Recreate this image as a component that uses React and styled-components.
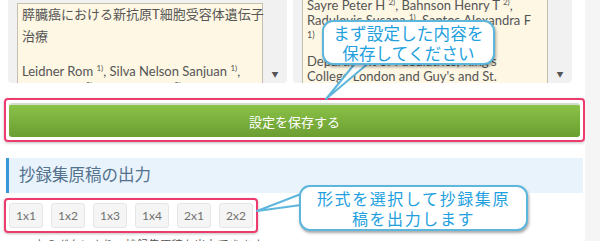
import React from 'react';
import styled, { createGlobalStyle } from 'styled-components';

const GlobalStyle = createGlobalStyle`
  body {
    margin: 0;
    background: #f5f5f5;
    font-family: Lato, "Noto Sans CJK JP", sans-serif;
  }
`;

const Page = styled.div`
  position: relative;
  width: 585px;
  height: 241px;
  overflow: hidden;
  background: #fff;
`;

const CardsRow = styled.div`
  display: flex;
  gap: 6px;
  padding: 0 0 0 8px;
`;

const Card = styled.div`
  display: flex;
  width: 279px;
  height: 83px;
  padding: ${p => p.$top}px 0 0 9px;
  box-sizing: border-box;
  background: #f1f1f1;
  border-radius: 0 0 4px 4px;
  overflow: hidden;
`;

const TextBox = styled.div`
  width: 246px;
  flex: none;
  box-sizing: border-box;
  height: 200px;
  margin-top: ${p => p.$shift}px;
  padding: 0 4px;
  background: #fdf7e4;
  border: 1px solid #c4bfb0;
  color: #555;
  font-size: 13px;
`;

const Line = styled.div`
  height: ${p => p.$h}px;
  line-height: ${p => p.$h}px;
  white-space: nowrap;
  font-size: ${p => (p.$small ? '9px' : '13px')};
`;

const Sup = styled.span`
  font-size: 8px;
  vertical-align: 5px;
  line-height: 0;
`;

const ScrollTrack = styled.div`
  flex: 1;
  display: flex;
  align-items: flex-end;
  justify-content: center;
  padding-bottom: 4px;
  color: #555;
  font-size: 7px;
`;

const Highlight = styled.div`
  display: ${p => (p.$inline ? 'inline-flex' : 'flex')};
  margin: ${p => p.$margin};
  padding: 3px;
  border: 2px solid #ec3b6c;
  border-radius: 4px;
  box-shadow: 0 1px 3px rgba(0, 0, 0, 0.25);
  gap: 8px;
`;

const SaveButton = styled.button`
  flex: 1;
  height: 34px;
  border: none;
  border-top: 2px solid #d6dccc;
  border-radius: 3px;
  background: linear-gradient(#8ac248, #6b9d31);
  color: #fff;
  font-family: Lato, "Noto Sans CJK JP", sans-serif;
  font-size: 13px;
`;

const SectionHeader = styled.h2`
  margin: 16px 2px 0 6px;
  height: 35px;
  padding-left: 10px;
  border-left: 3px solid #3a98d8;
  background: #e9f3fc;
  color: #53728e;
  font-size: 16.5px;
  font-weight: 400;
  line-height: 35px;
`;

const FormatButton = styled.button`
  width: 34px;
  height: 25px;
  padding: 0;
  border: 1px solid #e6e6e6;
  border-radius: 3px;
  background: #f5f5f5;
  color: #707070;
  font-family: Lato, sans-serif;
  font-size: 12px;
`;

const Note = styled.p`
  margin: 3px 0 0 34px;
  color: #555;
  font-size: 11.5px;
`;

const Bubble = styled.div`
  position: absolute;
  left: ${p => p.$x}px;
  top: ${p => p.$y}px;
  width: ${p => p.$w}px;
  height: ${p => p.$h}px;
  box-sizing: border-box;
  display: flex;
  flex-direction: column;
  justify-content: center;
  align-items: center;
  background: #fff;
  border: 2px solid #5db6dc;
  border-radius: 11px;
  box-shadow: 1px 2px 3px rgba(0, 0, 0, 0.35);
  color: #22a0de;
  font-family: "Noto Sans CJK JP", sans-serif;
  font-size: ${p => p.$fs}px;
  line-height: 20px;
  letter-spacing: ${p => p.$ls || 0}px;
  text-align: center;
`;

const Tail = styled.svg`
  position: absolute;
  left: 0;
  top: 0;
  overflow: visible;
  pointer-events: none;
`;

const formats = ['1x1', '1x2', '1x3', '1x4', '2x1', '2x2'];

export default function App() {
  return (
    <>
      <GlobalStyle />
      <Page>
        <CardsRow>
          <Card $top={3}>
            <TextBox $shift={0}>
              <Line $h={21}>膵臓癌における新抗原T細胞受容体遺伝子</Line>
              <Line $h={22}>治療</Line>
              <Line $h={15} />
              <Line $h={19}>
                Leidner Rom <Sup>1)</Sup>, Silva Nelson Sanjuan <Sup>1)</Sup>,
              </Line>
              <Line $h={15}>
                Lilly Alison <Sup>2)</Sup>, Kelsey Jones <Sup>2)</Sup>
              </Line>
            </TextBox>
            <ScrollTrack>▼</ScrollTrack>
          </Card>
          <Card $top={0}>
            <TextBox $shift={-3}>
              <Line $h={15}>
                Sayre Peter H <Sup>2)</Sup>, Bahnson Henry T <Sup>2)</Sup>,
              </Line>
              <Line $h={15}>
                Radulovic Susana <Sup>1)</Sup>, Santos Alexandra F
              </Line>
              <Line $h={13} $small>1)</Line>
              <Line $h={13} />
              <Line $h={15}>Department of Paediatrics, King's</Line>
              <Line $h={15}>College London and Guy's and St.</Line>
            </TextBox>
            <ScrollTrack>▼</ScrollTrack>
          </Card>
        </CardsRow>

        <Highlight $margin="15px 0 0 4px">
          <SaveButton>設定を保存する</SaveButton>
        </Highlight>

        <SectionHeader>抄録集原稿の出力</SectionHeader>

        <Highlight $inline $margin="5px 0 0 4px">
          {formats.map(f => (
            <FormatButton key={f}>{f}</FormatButton>
          ))}
        </Highlight>

        <Note>上のボタンより、抄録集原稿を出力できます。</Note>

        <Tail width="585" height="241">
          <polygon points="357,61 326,99 371,61" fill="#fff" stroke="#5db6dc" strokeWidth="2" strokeLinejoin="round" />
          <polygon points="301,194 257,211 301,205" fill="#fff" stroke="#5db6dc" strokeWidth="2" strokeLinejoin="round" />
        </Tail>
        <Bubble $x={322} $y={20} $w={173} $h={45} $fs={16.5} $ls={0.2}>
          <span>まず設定した内容を</span>
          <span>保存してください</span>
        </Bubble>
        <Bubble $x={299} $y={185} $w={229} $h={46} $fs={16} $ls={1.6}>
          <span>形式を選択して抄録集原</span>
          <span>稿を出力します</span>
        </Bubble>
      </Page>
    </>
  );
}
